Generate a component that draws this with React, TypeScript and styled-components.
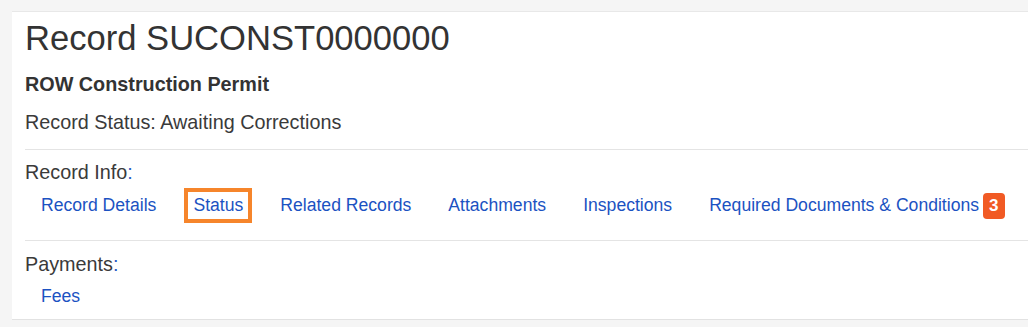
import React from 'react';
import styled, { createGlobalStyle } from 'styled-components';

const GlobalStyle = createGlobalStyle`
  html, body {
    margin: 0;
    padding: 0;
    background: #f5f5f5;
  }
  body {
    font-family: 'Liberation Sans', Arial, sans-serif;
    color: #333;
  }
`;

const Page = styled.div`
  padding: 11px 0 8px 12px;
`;

const Card = styled.div`
  background: #fff;
  border-top: 1px solid #e8e8e8;
  border-bottom: 1px solid #e2e2e2;
  padding: 6px 0 0 13px;
`;

const Title = styled.h1`
  margin: 0;
  font-size: 34.6px;
  font-weight: 400;
  line-height: 40px;
  color: #333;
`;

const Subtitle = styled.h2`
  margin: 14px 0 0;
  font-size: 19.8px;
  font-weight: 700;
  line-height: 24px;
  color: #333;
`;

const StatusLine = styled.p`
  margin: 14px 0 0;
  font-size: 19.8px;
  line-height: 24px;
  color: #3a3a3a;
  padding-bottom: 15px;
`;

const Section = styled.section<{ $last?: boolean }>`
  border-top: 1px solid #e4e4e4;
  padding: ${(p) => (p.$last ? '11px 0 6px' : '10px 0 17px')};
`;

const Label = styled.div`
  font-size: 19.8px;
  line-height: 24px;
  color: #3a3a3a;
`;

const Colon = styled.span`
  color: #2a5bc4;
`;

const LinkList = styled.ul`
  list-style: none;
  margin: 3.5px 0 0;
  padding: 0 0 0 7px;
  display: flex;
  gap: 19px;
  white-space: nowrap;
`;

const LinkItem = styled.li<{ $focused?: boolean }>`
  border: 4px solid ${(p) => (p.$focused ? '#f6852b' : 'transparent')};
  padding: 3px 5px;
`;

const Link = styled.a`
  display: inline-block;
  font-size: 17.6px;
  line-height: 20px;
  color: #1b52c2;
  text-decoration: none;
  cursor: pointer;
`;

const Badge = styled.span`
  display: inline-block;
  vertical-align: middle;
  height: 26px;
  line-height: 26px;
  margin: -3px 0 -3px 4px;
  padding: 0 6px;
  border-radius: 4px;
  background: #f15a24;
  color: #fff;
  font-size: 17px;
  font-weight: 700;
`;

const recordLinks = [
  { label: 'Record Details' },
  { label: 'Status', focused: true },
  { label: 'Related Records' },
  { label: 'Attachments' },
  { label: 'Inspections' },
  { label: 'Required Documents & Conditions', badge: 3 },
];

export default function App() {
  return (
    <>
      <GlobalStyle />
      <Page>
        <Card>
          <Title>Record SUCONST0000000</Title>
          <Subtitle>ROW Construction Permit</Subtitle>
          <StatusLine>Record Status: Awaiting Corrections</StatusLine>

          <Section>
            <Label>
              Record Info<Colon>:</Colon>
            </Label>
            <LinkList>
              {recordLinks.map((l) => (
                <LinkItem key={l.label} $focused={l.focused}>
                  <Link>
                    {l.label}
                    {l.badge !== undefined && <Badge>{l.badge}</Badge>}
                  </Link>
                </LinkItem>
              ))}
            </LinkList>
          </Section>

          <Section $last>
            <Label>
              Payments<Colon>:</Colon>
            </Label>
            <LinkList>
              <LinkItem>
                <Link>Fees</Link>
              </LinkItem>
            </LinkList>
          </Section>
        </Card>
      </Page>
    </>
  );
}
